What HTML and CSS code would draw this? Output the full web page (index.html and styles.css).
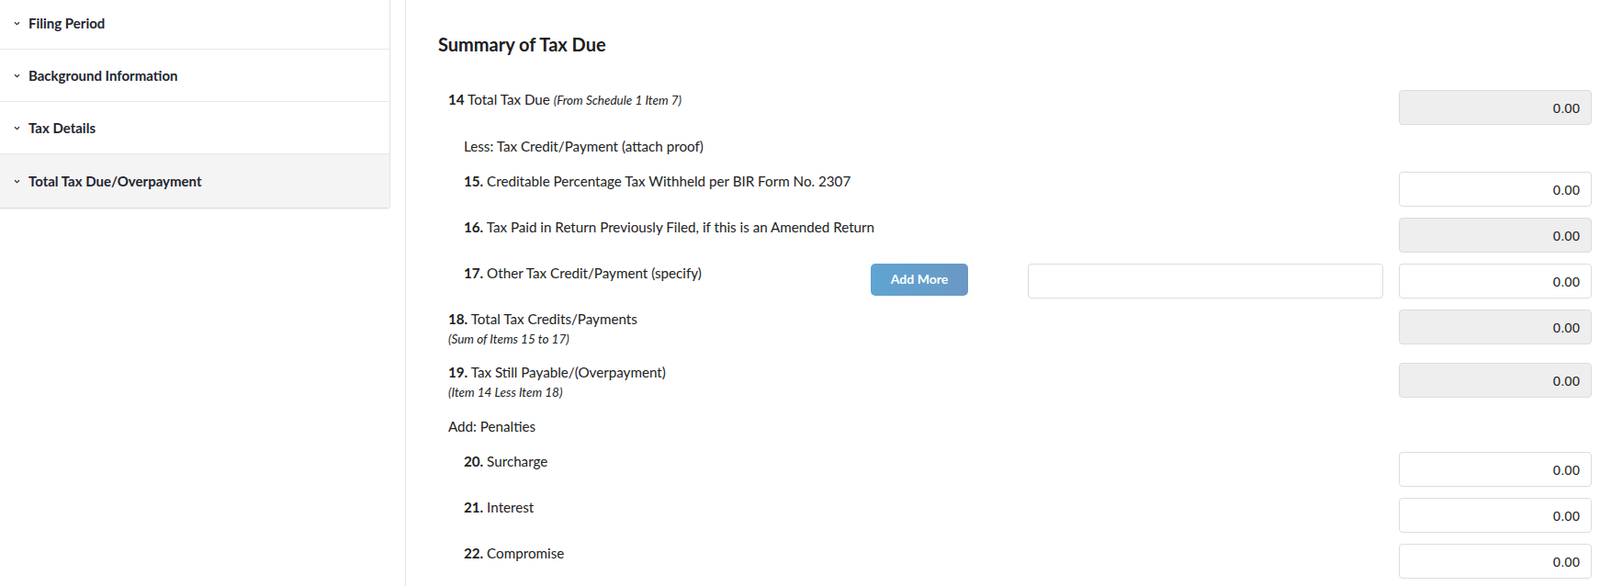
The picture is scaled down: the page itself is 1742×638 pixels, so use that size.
FILE: index.html
```html
<!DOCTYPE html>
<html lang="en">
<head>
<meta charset="utf-8">
<title>Summary of Tax Due</title>
<link rel="stylesheet" href="styles.css">
</head>
<body>
<div class="page">
  <aside class="sidebar">
    <div class="accordion">
      <div class="acc-item">
        <svg class="chev" width="7" height="5" viewBox="0 0 7 5"><path d="M1 1.2 L3.5 3.6 L6 1.2" fill="none" stroke="#333" stroke-width="1.2"/></svg>
        <span>Filing Period</span>
      </div>
      <div class="acc-item">
        <svg class="chev" width="7" height="5" viewBox="0 0 7 5"><path d="M1 1.2 L3.5 3.6 L6 1.2" fill="none" stroke="#333" stroke-width="1.2"/></svg>
        <span>Background Information</span>
      </div>
      <div class="acc-item">
        <svg class="chev" width="7" height="5" viewBox="0 0 7 5"><path d="M1 1.2 L3.5 3.6 L6 1.2" fill="none" stroke="#333" stroke-width="1.2"/></svg>
        <span>Tax Details</span>
      </div>
      <div class="acc-item active">
        <svg class="chev" width="7" height="5" viewBox="0 0 7 5"><path d="M1 1.2 L3.5 3.6 L6 1.2" fill="none" stroke="#333" stroke-width="1.2"/></svg>
        <span>Total Tax Due/Overpayment</span>
      </div>
    </div>
  </aside>
  <main class="main">
    <h2 class="title">Summary of Tax Due</h2>
    <div class="form">
      <div class="row lvl1">
        <div class="label"><b>14</b> Total Tax Due <i class="note">(From Schedule 1 Item 7)</i></div>
        <input class="amount" type="text" value="0.00" readonly>
      </div>
      <div class="section lvl2">Less: Tax Credit/Payment (attach proof)</div>
      <div class="row lvl2">
        <div class="label"><b>15.</b> Creditable Percentage Tax Withheld per BIR Form No. 2307</div>
        <input class="amount editable" type="text" value="0.00">
      </div>
      <div class="row lvl2">
        <div class="label"><b>16.</b> Tax Paid in Return Previously Filed, if this is an Amended Return</div>
        <input class="amount" type="text" value="0.00" readonly>
      </div>
      <div class="row lvl2 row-other">
        <div class="label label-other"><b>17.</b> Other Tax Credit/Payment (specify)</div>
        <button class="btn-add" type="button">Add More</button>
        <input class="spec" type="text" value="">
        <input class="amount editable" type="text" value="0.00">
      </div>
      <div class="row lvl1">
        <div class="label"><b>18.</b> Total Tax Credits/Payments
          <div class="sub">(Sum of Items 15 to 17)</div>
        </div>
        <input class="amount" type="text" value="0.00" readonly>
      </div>
      <div class="row lvl1">
        <div class="label"><b>19.</b> Tax Still Payable/(Overpayment)
          <div class="sub">(Item 14 Less Item 18)</div>
        </div>
        <input class="amount" type="text" value="0.00" readonly>
      </div>
      <div class="section lvl1">Add: Penalties</div>
      <div class="row lvl2">
        <div class="label"><b>20.</b> Surcharge</div>
        <input class="amount editable" type="text" value="0.00">
      </div>
      <div class="row lvl2">
        <div class="label"><b>21.</b> Interest</div>
        <input class="amount editable" type="text" value="0.00">
      </div>
      <div class="row lvl2">
        <div class="label"><b>22.</b> Compromise</div>
        <input class="amount editable" type="text" value="0.00">
      </div>
    </div>
  </main>
</div>
</body>
</html>
```
FILE: styles.css
```css
html, body {
  margin: 0;
  padding: 0;
  background: #fff;
}
body {
  font-family: Lato, "Open Sans", "Liberation Sans", sans-serif;
  color: #222;
  font-size: 15px;
  overflow: hidden;
}
.page {
  display: flex;
  align-items: stretch;
  min-height: 638px;
}
.sidebar {
  flex: 0 0 425px;
  width: 425px;
}
.accordion {
  margin-top: -3px;
  border-right: 1px solid #e3e3e3;
  border-bottom: 1px solid #dcdcdc;
  border-radius: 0 0 4px 0;
  box-shadow: 0 1px 2px rgba(0, 0, 0, 0.06);
  background: #fff;
}
.acc-item {
  height: 56px;
  display: flex;
  align-items: center;
  padding-left: 15px;
  border-bottom: 1px solid #e8e8e8;
  font-weight: 700;
  font-size: 15px;
  color: #1e2530;
}
.acc-item:last-child {
  height: 58px;
  border-bottom: none;
}
.acc-item.active {
  background: #f4f4f4;
}
.chev {
  display: block;
  margin-right: 9px;
  margin-top: 1px;
}
.main {
  flex: 1;
  margin-left: 16px;
  border-left: 1px solid #e6e6e6;
  padding: 0 9px 0 35px;
}
.title {
  margin: 36px 0 38px;
  font-size: 20px;
  line-height: 24px;
  font-weight: 700;
  color: #1c1c1c;
}
.row {
  display: flex;
  align-items: flex-start;
  margin-bottom: 12px;
}
.lvl1 {
  padding-left: 11px;
}
.lvl2 {
  padding-left: 28px;
}
.label {
  flex: 1;
  line-height: 20px;
  font-size: 15.2px;
}
.label b {
  font-weight: 700;
}
.note {
  font-size: 13.5px;
}
.sub {
  font-style: italic;
  font-size: 13.5px;
  line-height: 16px;
  margin-top: 4px;
  margin-bottom: 6px;
}
.section {
  line-height: 20px;
  font-size: 15.2px;
  padding-top: 1px;
  margin-bottom: 18px;
}
.amount {
  box-sizing: border-box;
  flex: 0 0 210px;
  width: 210px;
  height: 38px;
  margin: 0 0 0 auto;
  padding: 0 12px;
  border: 1px solid #dcdcdc;
  border-radius: 4px;
  background: #eeeeee;
  font-family: "Liberation Sans", Arial, sans-serif;
  font-size: 15px;
  color: #222;
  text-align: right;
  outline: none;
}
.amount.editable {
  background: #fff;
}
.label-other {
  flex: 0 0 443px;
}
.btn-add {
  flex: 0 0 106px;
  height: 35px;
  border: none;
  border-radius: 5px;
  background: linear-gradient(90deg, #5fa4d1, #6b98c5);
  color: #fff;
  font-family: Lato, "Open Sans", sans-serif;
  font-weight: 700;
  font-size: 14px;
  padding: 0 0 2px;
}
.spec {
  box-sizing: border-box;
  flex: 0 0 387px;
  width: 387px;
  height: 38px;
  margin: 0 0 0 65px;
  border: 1px solid #dcdcdc;
  border-radius: 4px;
  background: #fff;
  outline: none;
}
```
